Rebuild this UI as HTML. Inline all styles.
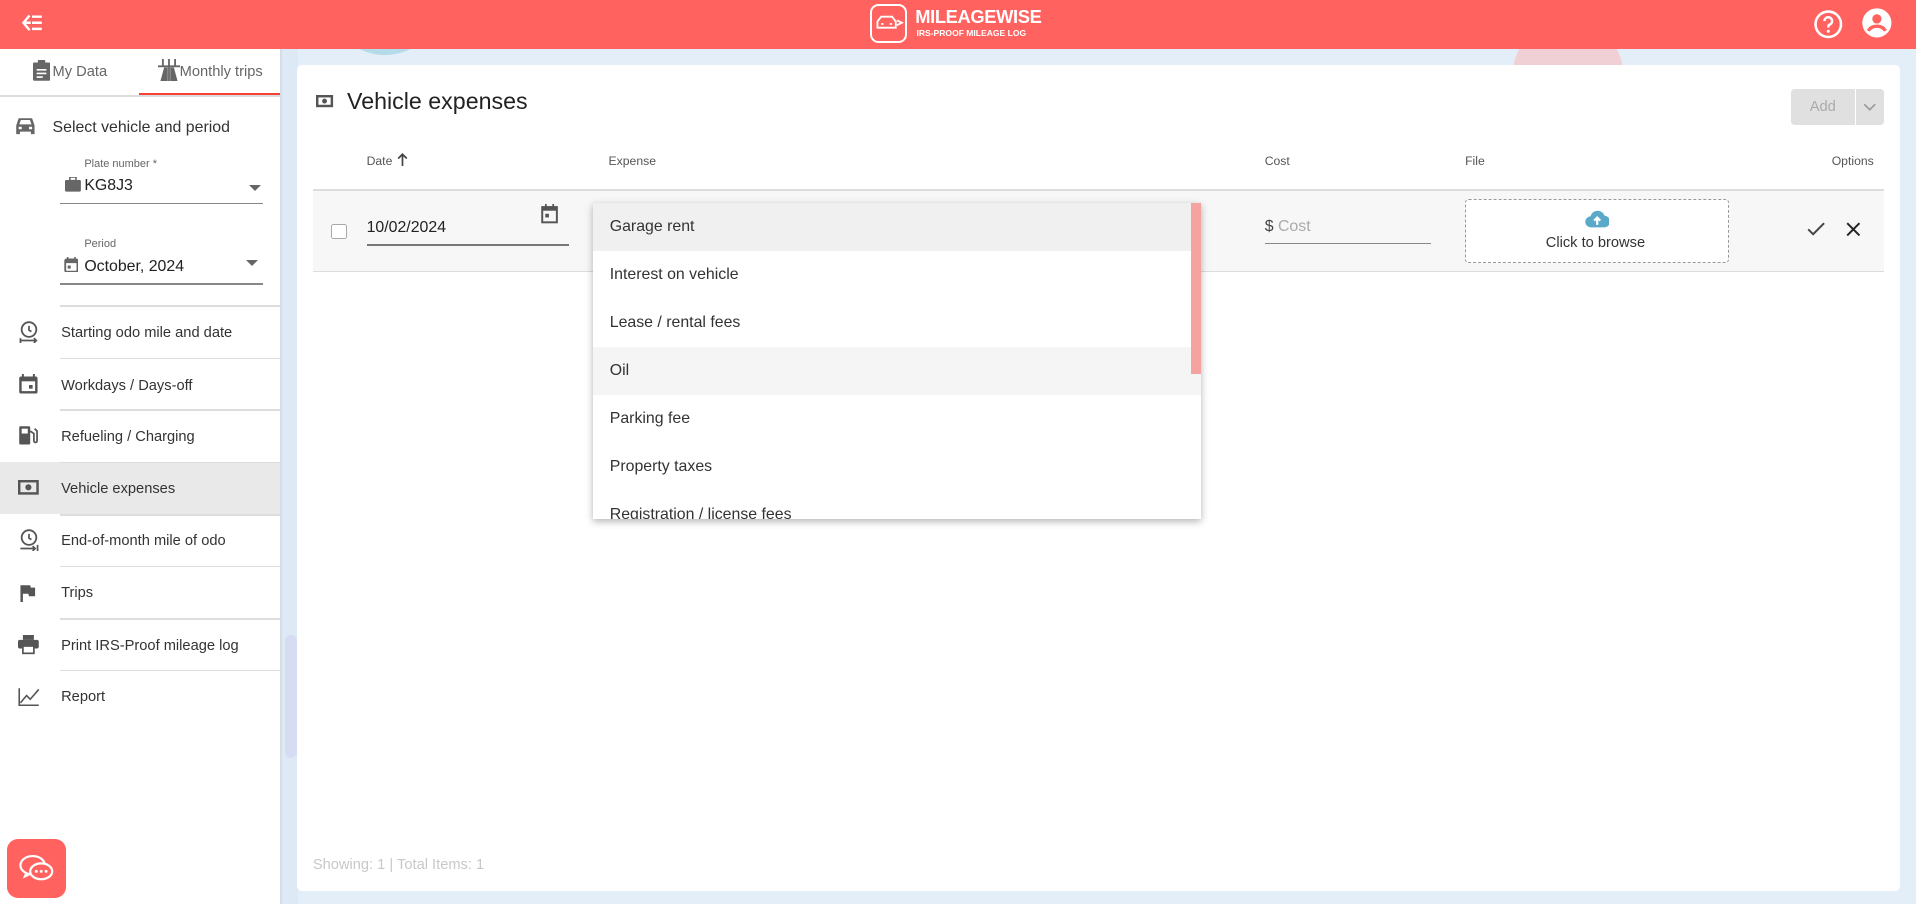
<!DOCTYPE html>
<html><head><meta charset="utf-8">
<style>
html,body{margin:0;padding:0;overflow:hidden;}
body{width:1568px;height:740px;zoom:1.22194;position:relative;font-family:"Liberation Sans",Roboto,sans-serif;background:#e4eef8;color:#333;}
.a{position:absolute;}
.hdr{left:0;top:0;width:1568px;height:40px;background:#ff625f;}
.side{left:0;top:40px;width:229px;height:700px;background:#fff;border-right:2px solid #d8dde3;}
.t{position:absolute;white-space:nowrap;}
.sep{position:absolute;left:49px;width:180px;height:1px;background:#ddd;}
.item{position:absolute;left:50px;font-size:12px;color:#333;margin-top:1px;}
.ico{position:absolute;left:15px;}
.card{left:243px;top:53px;width:1312px;height:676px;background:#fff;border-radius:4px;}
.th{position:absolute;top:126px;font-size:10px;color:#555;}
.dd{left:485px;top:166px;width:498px;height:259px;background:#fff;box-shadow:0 2px 6px rgba(0,0,0,.3);overflow:hidden;}
.dd div{height:39.3px;line-height:40px;padding-left:14px;font-size:13px;color:#333;}
</style></head><body>
<div class="a" style="left:270px;top:-40px;width:90px;height:85px;border-radius:50%;background:#b5dbe8;"></div>
<div class="a" style="left:1238px;top:20px;width:90px;height:80px;border-radius:45px;background:#f1d0d5;"></div>
<div class="a" style="left:230px;top:40px;width:14px;height:700px;background:#dde9f4;"></div>
<div class="a" style="left:233px;top:520px;width:10px;height:100px;background:#d6dcf3;border-radius:5px;"></div>

<div class="a hdr"></div>
<svg class="a" style="left:17px;top:11px" width="18" height="16" viewBox="0 0 18 16"><path d="M7 2L2 8l5 6M2 8h6M9 3h8M9 8h8M9 13h8" stroke="#fff" stroke-width="2" fill="none"/></svg>
<div class="a" style="left:712px;top:3px;width:30px;height:32px;border:2px solid #fff;border-radius:7px;box-sizing:border-box;"></div>
<svg class="a" style="left:716px;top:11px" width="24" height="16" viewBox="0 0 24 16"><path d="M2 12V7l3-4h9l3 4v5H2zM5 9h2M12 9h2M18 6l4 2-4 2" stroke="#fff" stroke-width="1.5" fill="none"/></svg>
<div class="t" style="left:749px;top:5px;color:#fff;font-weight:bold;font-size:15px;letter-spacing:-.3px;">MILEAGEWISE</div>
<div class="t" style="left:750px;top:23px;color:#fff;font-size:7px;font-weight:bold;">IRS-PROOF MILEAGE LOG</div>
<svg class="a" style="left:1484px;top:7px" width="25" height="25" viewBox="0 0 24 24"><circle cx="12" cy="12" r="10" stroke="#fff" stroke-width="2" fill="none"/><path d="M9 9.5a3 3 0 1 1 4 2.8c-1 .4-1 1.2-1 2.2" stroke="#fff" stroke-width="2" fill="none"/><circle cx="12" cy="17.5" r="1.2" fill="#fff"/></svg>
<svg class="a" style="left:1523px;top:6px" width="26" height="26" viewBox="0 0 24 24"><circle cx="12" cy="12" r="11" fill="#fff"/><circle cx="12" cy="9" r="3.5" fill="#ff625f"/><path d="M5.5 18c1.5-2.5 4-3.5 6.5-3.5s5 1 6.5 3.5" stroke="#ff625f" stroke-width="2.5" fill="none"/></svg>

<div class="a side">
 <div class="a" style="left:0;top:38px;width:229px;height:1px;background:#ddd"></div>
 <div class="a" style="left:114px;top:36px;width:115px;height:2px;background:#f44336"></div>
 <svg class="a" style="left:27px;top:9px" width="14" height="17" viewBox="0 0 14 17"><rect x="0" y="2" width="14" height="15" rx="1" fill="#666"/><rect x="4" y="0" width="6" height="4" fill="#666"/><path d="M3 8h8M3 11h8M3 14h5" stroke="#fff" stroke-width="1.3"/></svg>
 <div class="t" style="left:43px;top:12px;font-size:12px;color:#666">My Data</div>
 <svg class="a" style="left:129px;top:8px" width="18" height="18" viewBox="0 0 18 18"><path d="M0 6h18M9 0v18M4 0v6M14 0v6" stroke="#666" stroke-width="1.5"/><path d="M2 18l3-11h3v11zM16 18l-3-11h-3v11z" fill="#666"/></svg>
 <div class="t" style="left:147px;top:12px;font-size:12px;color:#666">Monthly trips</div>
 <svg class="a" style="left:12px;top:56px" width="17" height="15" viewBox="0 0 17 15"><path d="M1 14V7l2-6h11l2 6v7h-3v-2H4v2z" fill="#666"/><rect x="3" y="8" width="2.5" height="2" fill="#fff"/><rect x="11.5" y="8" width="2.5" height="2" fill="#fff"/><path d="M3.5 6l1.3-3.5h7.4L13.5 6z" fill="#fff"/></svg>
 <div class="t" style="left:43px;top:57px;font-size:13px;color:#333">Select vehicle and period</div>
 <div class="t" style="left:69px;top:89px;font-size:9px;color:#666">Plate number *</div>
 <svg class="a" style="left:53px;top:105px" width="13" height="12" viewBox="0 0 13 12"><rect x="0" y="2.5" width="13" height="9.5" rx="1" fill="#666"/><rect x="4" y="0" width="5" height="3" fill="none" stroke="#666" stroke-width="1.3"/></svg>
 <div class="t" style="left:69px;top:105px;font-size:13px;color:#222">KG8J3</div>
 <div class="a" style="left:204px;top:111px;border:5px solid transparent;border-top-color:#666;"></div>
 <div class="a" style="left:49px;top:126px;width:166px;height:1px;background:#888"></div>
 <div class="t" style="left:69px;top:155px;font-size:9px;color:#666">Period</div>
 <svg class="a" style="left:52px;top:170px" width="12" height="13" viewBox="0 0 12 13"><rect x="1" y="2" width="10" height="10" rx="1" fill="none" stroke="#666" stroke-width="1.5"/><rect x="1" y="2" width="10" height="3" fill="#666"/><path d="M3 0v3M9 0v3" stroke="#666" stroke-width="1.3"/><rect x="3" y="7" width="2.5" height="2.5" fill="#666"/></svg>
 <div class="t" style="left:69px;top:171px;font-size:13px;color:#222">October, 2024</div>
 <div class="a" style="left:201px;top:173px;border:5px solid transparent;border-top-color:#666;"></div>
 <div class="a" style="left:49px;top:192px;width:166px;height:1px;background:#888"></div>

 <div class="sep" style="top:210px"></div><div class="sep" style="top:253px"></div><div class="sep" style="top:295px"></div>
 <div class="a" style="left:0;top:338px;width:229px;height:43px;background:#e9e9e9"></div>
 <div class="sep" style="top:338px"></div><div class="sep" style="top:381px"></div><div class="sep" style="top:423px"></div><div class="sep" style="top:466px"></div><div class="sep" style="top:508px"></div>

 <svg class="ico" style="top:223px" width="18" height="18" viewBox="0 0 18 18"><circle cx="9" cy="7" r="6" fill="none" stroke="#555" stroke-width="1.5"/><path d="M9 4v3.5l2 1.2M2 16h13M13 14l2 2-2 2M2 14v4" stroke="#555" stroke-width="1.4" fill="none"/></svg>
 <div class="item" style="top:225px">Starting odo mile and date</div>
 <svg class="ico" style="top:266px" width="17" height="17" viewBox="0 0 17 17"><rect x="1" y="2" width="15" height="14" rx="1.5" fill="#555"/><rect x="3" y="6" width="11" height="8" fill="#fff"/><rect x="9" y="9" width="3" height="3" fill="#555"/><path d="M4 0v3M13 0v3" stroke="#555" stroke-width="1.6"/></svg>
 <div class="item" style="top:268px">Workdays / Days-off</div>
 <svg class="ico" style="top:308px" width="17" height="17" viewBox="0 0 17 17"><rect x="1" y="1" width="9" height="15" rx="1" fill="#555"/><rect x="3" y="3" width="5" height="4" fill="#fff"/><path d="M10 5l3 2v6a1.3 1.3 0 0 0 2.6 0V5l-2-2" stroke="#555" stroke-width="1.4" fill="none"/></svg>
 <div class="item" style="top:310px">Refueling / Charging</div>
 <svg class="ico" style="top:353px" width="17" height="12" viewBox="0 0 17 12"><rect x="1" y="1" width="15" height="10" fill="none" stroke="#555" stroke-width="2"/><circle cx="8.5" cy="6" r="2.5" fill="#555"/></svg>
 <div class="item" style="top:353px">Vehicle expenses</div>
 <svg class="ico" style="top:393px" width="18" height="18" viewBox="0 0 18 18"><circle cx="9" cy="7" r="6" fill="none" stroke="#555" stroke-width="1.5"/><path d="M9 4v3.5l2 1.2M2 16h12M12 14l2 2-2 2M16 13v5" stroke="#555" stroke-width="1.4" fill="none"/></svg>
 <div class="item" style="top:395px">End-of-month mile of odo</div>
 <svg class="ico" style="top:438px" width="15" height="15" viewBox="0 0 15 15"><path d="M2 15V1h8l.5 2H14v7H9l-.5-2H4v7z" fill="#555"/></svg>
 <div class="item" style="top:438px">Trips</div>
 <svg class="ico" style="top:480px" width="17" height="16" viewBox="0 0 17 16"><rect x="4" y="0" width="9" height="4" fill="#555"/><rect x="0" y="4" width="17" height="7" rx="1.5" fill="#555"/><rect x="4" y="9" width="9" height="6" fill="#fff" stroke="#555" stroke-width="1.4"/></svg>
 <div class="item" style="top:481px">Print IRS-Proof mileage log</div>
 <svg class="ico" style="top:522px" width="18" height="16" viewBox="0 0 18 16"><path d="M1 1v14h16" stroke="#555" stroke-width="1.3" fill="none"/><path d="M2 13l5-6 3 3 7-8" stroke="#555" stroke-width="1.3" fill="none"/></svg>
 <div class="item" style="top:523px">Report</div>

 <div class="a" style="left:6px;top:647px;width:48px;height:48px;border-radius:9px;background:#ff625f"></div>
 <svg class="a" style="left:15px;top:658px" width="31" height="26" viewBox="0 0 31 26"><ellipse cx="12" cy="10" rx="10" ry="7.5" fill="none" stroke="#fff" stroke-width="1.8"/><path d="M6 16l-2 5 6-3" fill="#fff"/><ellipse cx="19" cy="15" rx="9" ry="6.5" fill="#ff625f" stroke="#fff" stroke-width="1.8"/><circle cx="15" cy="15" r="1.2" fill="#fff"/><circle cx="19" cy="15" r="1.2" fill="#fff"/><circle cx="23" cy="15" r="1.2" fill="#fff"/></svg>
</div>

<div class="a card"></div>
<svg class="a" style="left:259px;top:78px" width="14" height="10" viewBox="0 0 14 10"><rect x="1" y="1" width="12" height="8" fill="none" stroke="#555" stroke-width="2"/><circle cx="7" cy="5" r="2" fill="#555"/></svg>
<div class="t" style="left:284px;top:72px;font-size:19px;color:#222">Vehicle expenses</div>
<div class="a" style="left:1466px;top:73px;width:76px;height:29px;background:#e0e0e0;border-radius:3px"></div>
<div class="a" style="left:1518px;top:73px;width:1px;height:29px;background:#fff"></div>
<div class="t" style="left:1481px;top:81px;font-size:12px;color:#aaa">Add</div>
<svg class="a" style="left:1525px;top:84px" width="11" height="7" viewBox="0 0 11 7"><path d="M1 1l4.5 4.5L10 1" stroke="#999" stroke-width="1.3" fill="none"/></svg>

<div class="th" style="left:300px">Date</div>
<svg class="a" style="left:325px;top:125px" width="9" height="11" viewBox="0 0 9 11"><path d="M4.5 11V1M1 4.5l3.5-3.5L8 4.5" stroke="#444" stroke-width="1.4" fill="none"/></svg>
<div class="th" style="left:498px">Expense</div>
<div class="th" style="left:1035px">Cost</div>
<div class="th" style="left:1199px">File</div>
<div class="th" style="left:1499px">Options</div>
<div class="a" style="left:256px;top:155px;width:1286px;height:1px;background:#ddd"></div>
<div class="a" style="left:256px;top:156px;width:1286px;height:66px;background:#f7f7f7"></div>
<div class="a" style="left:256px;top:222px;width:1286px;height:1px;background:#ddd"></div>
<div class="a" style="left:271px;top:183px;width:11px;height:11px;border:1.5px solid #aaa;border-radius:2px;background:#fff"></div>
<div class="t" style="left:300px;top:179px;font-size:13px;color:#222">10/02/2024</div>
<div class="a" style="left:300px;top:200px;width:166px;height:1px;background:#777"></div>
<svg class="a" style="left:443px;top:167px" width="14" height="16" viewBox="0 0 14 16"><rect x="1" y="2.5" width="12" height="12.5" fill="none" stroke="#555" stroke-width="1.6"/><rect x="1" y="2.5" width="12" height="3" fill="#555"/><path d="M4 0v3M10 0v3" stroke="#555" stroke-width="1.4"/><rect x="3.5" y="8" width="3" height="3" fill="#555"/></svg>

<div class="t" style="left:1035px;top:178px;font-size:13px;color:#aaa"><span style="color:#444">$</span> Cost</div>
<div class="a" style="left:1035px;top:199px;width:136px;height:1px;background:#888"></div>
<div class="a" style="left:1199px;top:163px;width:216px;height:52px;border:1px dashed #999;border-radius:3px;background:#fff;box-sizing:border-box"></div>
<svg class="a" style="left:1297px;top:171px" width="20" height="16" viewBox="0 0 20 16"><path d="M5 15a4.5 4.5 0 0 1-.5-9A6 6 0 0 1 16 5.5 4.5 4.5 0 0 1 15.5 15z" fill="#5aa9c8"/><path d="M10 13V7M7.5 9.5L10 7l2.5 2.5" stroke="#fff" stroke-width="1.8" fill="none"/></svg>
<div class="t" style="left:1265px;top:192px;font-size:12px;color:#333">Click to browse</div>
<svg class="a" style="left:1479px;top:182px" width="15" height="12" viewBox="0 0 15 12"><path d="M1 6l4 4 9-9" stroke="#444" stroke-width="1.6" fill="none"/></svg>
<svg class="a" style="left:1511px;top:182px" width="12" height="12" viewBox="0 0 12 12"><path d="M1 1l10 10M11 1L1 11" stroke="#222" stroke-width="1.6"/></svg>

<div class="a dd">
 <div style="background:#f0f0f0">Garage rent</div>
 <div>Interest on vehicle</div>
 <div>Lease / rental fees</div>
 <div style="background:#f5f5f5">Oil</div>
 <div>Parking fee</div>
 <div>Property taxes</div>
 <div>Registration / license fees</div>
</div>
<div class="a" style="left:975px;top:166px;width:8px;height:140px;background:#f4a3a0"></div>

<div class="t" style="left:256px;top:701px;font-size:12px;color:#c8c8c8">Showing: 1 | Total Items: 1</div>
</body></html>
